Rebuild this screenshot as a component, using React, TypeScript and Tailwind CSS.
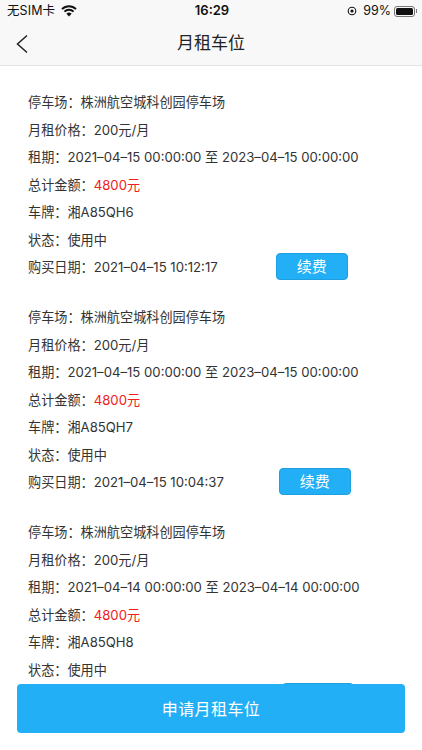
import React from 'react';

const font = { fontFamily: 'Inter, "Noto Sans CJK SC", sans-serif' };

interface Order {
  period: string;
  plate: string;
  bought: string;
  gap: string;
}

const orders: Order[] = [
  { period: '2021–04–15 00:00:00 至 2023–04–15 00:00:00', plate: '湘A85QH6', bought: '2021–04–15 10:12:17', gap: 'ml-[58px]' },
  { period: '2021–04–15 00:00:00 至 2023–04–15 00:00:00', plate: '湘A85QH7', bought: '2021–04–15 10:04:37', gap: 'ml-[55px]' },
  { period: '2021–04–14 00:00:00 至 2023–04–14 00:00:00', plate: '湘A85QH8', bought: '2021–04–14 16:20:08', gap: 'ml-[57px]' },
];

const Row: React.FC<{ children: React.ReactNode }> = ({ children }) => (
  <div className="h-[27.5px] flex items-center whitespace-pre">{children}</div>
);

export default function App() {
  return (
    <div className="relative w-[422px] h-[750px] overflow-hidden bg-white text-[#333333]" style={font}>
      {/* Status + nav */}
      <div className="h-[66px] bg-[#f8f8f8] border-b border-[#e4e4e6]">
        <div className="h-[22px] flex items-center justify-between pl-[7px] pr-[5px] text-[12.5px] text-[#111111]">
          <div className="w-[150px] flex items-center">
            <span className="tracking-[0.1px]">无SIM卡</span>
            <svg width="16" height="12" viewBox="0 0 16 12" className="ml-[6px]">
              <path d="M8 11.5 L5.4 8.7 A3.8 3.8 0 0 1 10.6 8.7 Z" fill="#111" />
              <path d="M3.4 6.6 A6.6 6.6 0 0 1 12.6 6.6" fill="none" stroke="#111" strokeWidth="1.9" />
              <path d="M1 4.1 A10 10 0 0 1 15 4.1" fill="none" stroke="#111" strokeWidth="1.9" />
            </svg>
          </div>
          <span className="font-semibold text-[13px]">16:29</span>
          <div className="w-[150px] flex items-center justify-end">
            <svg width="10" height="10" viewBox="0 0 10 10" className="mr-[6px]">
              <circle cx="5" cy="5" r="3.8" fill="none" stroke="#111" strokeWidth="1.1" />
              <circle cx="5" cy="5" r="1.6" fill="#111" />
            </svg>
            <span>99%</span>
            <div className="ml-[3px] w-[21px] h-[11px] rounded-[3px] border border-[#777] p-[1px]">
              <div className="w-full h-full bg-[#111] rounded-[1.5px]" />
            </div>
            <div className="w-[1px] h-[4px] ml-[1px] bg-[#777]" />
          </div>
        </div>
        <div className="relative h-[43px] flex items-center justify-center text-[17px] text-[#222222]">
          <svg width="14" height="20" viewBox="0 0 14 20" className="absolute left-[15px] top-[12px]">
            <path d="M12 1.5 L2.5 10 L12 18.5" fill="none" stroke="#222" strokeWidth="1.5" />
          </svg>
          月租车位
        </div>
      </div>

      {/* List */}
      <div className="pt-[23px] pl-[28px] text-[13.15px] leading-none">
        {orders.map((o) => (
          <div key={o.plate} className="h-[215px]">
            <Row>停车场：株洲航空城科创园停车场</Row>
            <Row>月租价格：200元/月</Row>
            <Row>租期：{o.period}</Row>
            <Row>
              总计金额：<span className="text-[#f02020]">4800元</span>
            </Row>
            <Row>车牌：{o.plate}</Row>
            <Row>状态：使用中</Row>
            <Row>
              购买日期：{o.bought}
              <button className={`${o.gap} mb-[2px] w-[72px] h-[27px] shrink-0 rounded-[4px] bg-[#22aff5] border border-[#1f9fe0] text-white text-[15px]`}>
                续费
              </button>
            </Row>
          </div>
        ))}
      </div>

      {/* Fixed apply button */}
      <button className="absolute left-[17px] top-[684px] w-[388px] h-[49px] rounded-[4px] bg-[#22aff5] text-white text-[16px] tracking-[0.4px]">
        申请月租车位
      </button>
    </div>
  );
}
